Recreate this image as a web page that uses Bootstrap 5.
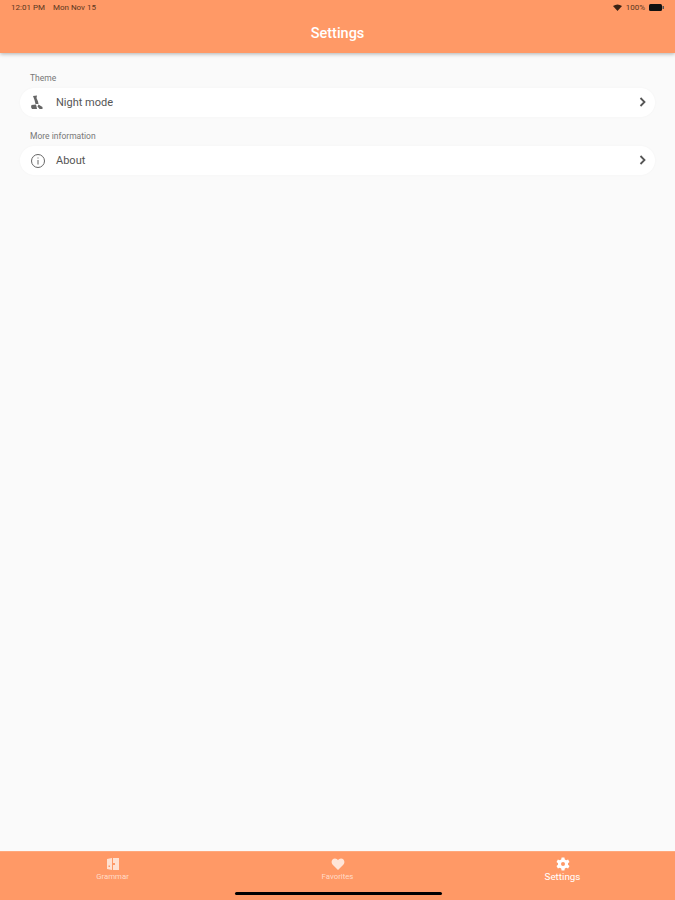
<!DOCTYPE html>
<html lang="en">
<head>
    <meta charset="UTF-8">
    <meta name="viewport" content="width=device-width, initial-scale=1.0">
    <title>Settings</title>
    <link href="https://cdn.jsdelivr.net/npm/bootstrap@5.3.0/dist/css/bootstrap.min.css" rel="stylesheet">
    <style>
        body {
            background-color: #fafafa;
            font-family: "Roboto", "Liberation Sans", sans-serif;
            height: 900px;
            overflow: hidden;
        }

        .app-shell {
            height: 900px;
        }

        .top-bar {
            height: 53px;
            background-color: #ff9966;
            box-shadow: 0 1px 4px rgba(0, 0, 0, 0.3);
        }

        .status-row {
            height: 15px;
            padding: 0 11px;
            font-size: 8px;
            color: #5a3620;
        }

        .bar-title {
            color: #fff;
            font-size: 14.5px;
            font-weight: 500;
            line-height: 20px;
            margin-top: 9px;
        }

        .settings-body {
            padding: 19px 20px 0;
        }

        .group-label {
            font-size: 8.5px;
            line-height: 12px;
            color: #777;
            padding-left: 10px;
            margin-bottom: 4px;
        }

        .setting-row {
            height: 29px;
            border-radius: 15px;
            background-color: #fff;
            box-shadow: 0 0 3px rgba(0, 0, 0, 0.03);
            padding: 0 9px 0 10px;
            font-size: 11px;
            color: #555;
            margin-bottom: 13px;
        }

        .row-icon {
            width: 16px;
            margin-right: 10px;
        }

        .row-text {
            padding-top: 1px;
        }

        .row-chevron {
            margin-bottom: 1px;
        }

        .bottom-bar {
            height: 49px;
            background-color: #ff9966;
            border-top: 1px solid #ffa87c;
        }

        .tab-item {
            flex: 1 1 0;
            padding-top: 5px;
            color: rgba(255, 255, 255, 0.65);
            font-size: 7.8px;
            line-height: 10px;
        }

        .tab-label {
            margin-top: 1px;
        }

        .tab-item.tab-active {
            color: #fff;
            font-size: 9.8px;
            line-height: 10px;
        }

        .home-bar {
            width: 207px;
            height: 3px;
            border-radius: 2px;
            background-color: #000;
            left: 235px;
            bottom: 5px;
        }
    </style>
</head>
<body>
    <div class="app-shell d-flex flex-column position-relative">
        <header class="top-bar text-center">
            <div class="status-row d-flex justify-content-between align-items-center">
                <div class="d-flex gap-2"><span>12:01 PM</span><span>Mon Nov 15</span></div>
                <div class="d-flex align-items-center gap-1">
                    <svg width="9" height="7" viewBox="0 0 9 7"><path d="M0 2 Q4.500 -1 9 2 L4.500 7z" fill="#3a2214"/></svg>
                    <span>100%</span>
                    <svg width="15" height="7" viewBox="0 0 15 7"><rect width="13" height="7" rx="1.500" fill="#111"/><rect x="13.500" y="2" width="1.500" height="3" fill="#555"/></svg>
                </div>
            </div>
            <div class="bar-title">Settings</div>
        </header>

        <main class="settings-body flex-grow-1">
            <div class="group-label">Theme</div>
            <div class="setting-row d-flex align-items-center">
                <svg class="row-icon" width="16" height="16" viewBox="0 0 16 16" fill="#666">
                    <path d="M3 1 L7 0.500 L6.500 3 L8 6.500 L8.500 9 L5.500 9 L4.500 5z"/>
                    <path d="M8.500 9.500 L12.500 12 L12.500 14 L9.500 14 L7.500 11.500z"/>
                    <path d="M1.500 10 L6 9.500 L6.500 11.500 L7 14 L2 14 L1 12z"/>
                </svg>
                <span class="row-text flex-grow-1">Night mode</span>
                <svg class="row-chevron" width="7" height="10" viewBox="0 0 7 10" fill="none" stroke="#555" stroke-width="1.800"><path d="M1.500 1 L5.500 5 L1.500 9"/></svg>
            </div>

            <div class="group-label">More information</div>
            <div class="setting-row d-flex align-items-center">
                <svg class="row-icon" width="16" height="16" viewBox="0 0 16 16" fill="none" stroke="#666" stroke-width="1">
                    <circle cx="8" cy="8" r="6.500"/>
                    <path d="M8 7 V11.500"/>
                    <path d="M8 4.500 V5.500"/>
                </svg>
                <span class="row-text flex-grow-1">About</span>
                <svg class="row-chevron" width="7" height="10" viewBox="0 0 7 10" fill="none" stroke="#555" stroke-width="1.800"><path d="M1.500 1 L5.500 5 L1.500 9"/></svg>
            </div>
        </main>

        <nav class="bottom-bar d-flex text-center">
            <div class="tab-item">
                <svg class="d-block mx-auto" width="14" height="14" viewBox="0 0 14 14" fill="rgba(255,255,255,0.7)">
                    <path fill-rule="evenodd" d="M1 2 L6 1 V13 L1 12z M2.500 8.500 V10 H4 V8.500z"/>
                    <path d="M7 1 H13 V13 H7 V8 H9 V6 H7z"/>
                </svg>
                <div class="tab-label">Grammar</div>
            </div>
            <div class="tab-item">
                <svg class="d-block mx-auto" width="14" height="14" viewBox="0 0 14 14" fill="rgba(255,255,255,0.75)">
                    <path d="M7 13 L1.500 7.500 C-0.500 5 1 1.500 4 1.500 C5.300 1.500 6.400 2.200 7 3.300 C7.600 2.200 8.700 1.500 10 1.500 C13 1.500 14.500 5 12.500 7.500z"/>
                </svg>
                <div class="tab-label">Favorites</div>
            </div>
            <div class="tab-item tab-active">
                <svg class="d-block mx-auto" width="14" height="14" viewBox="0 0 14 14" fill="#fff">
                    <path fill-rule="evenodd" d="M5.600 0.500 H8.400 L8.800 2.400 L10.300 3.200 L12.100 2.500 L13.500 5 L12 6.200 V7.800 L13.500 9 L12.100 11.500 L10.300 10.800 L8.800 11.600 L8.400 13.500 H5.600 L5.200 11.600 L3.700 10.800 L1.900 11.500 L0.500 9 L2 7.800 V6.200 L0.500 5 L1.900 2.500 L3.700 3.200 L5.200 2.400z M7 5 A2 2 0 1 0 7 9 A2 2 0 1 0 7 5z"/>
                </svg>
                <div class="tab-label">Settings</div>
            </div>
        </nav>
        <div class="home-bar position-absolute"></div>
    </div>

    <script src="https://cdn.jsdelivr.net/npm/bootstrap@5.3.0/dist/js/bootstrap.bundle.min.js"></script>
</body>
</html>
